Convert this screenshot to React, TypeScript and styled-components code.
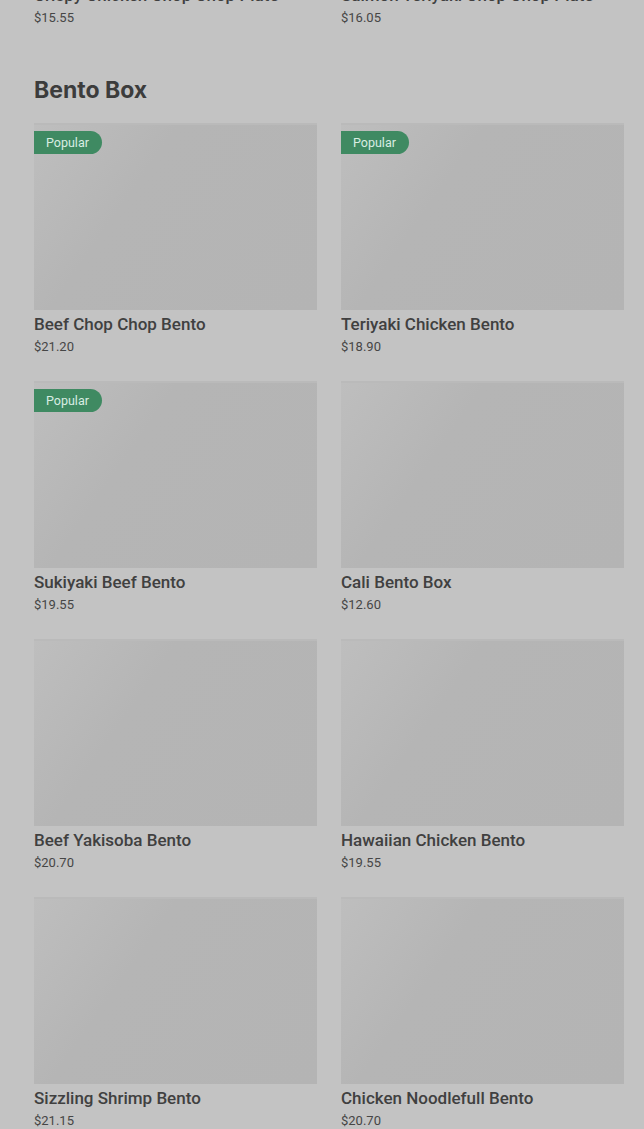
import React from "react";
import styled, { createGlobalStyle } from "styled-components";

type Item = { name: string; price: string; popular?: boolean };

const previous: Item[] = [
  { name: "Crispy Chicken Chop Chop Plate", price: "$15.55" },
  { name: "Salmon Teriyaki Chop Chop Plate", price: "$16.05" },
];

const bento: Item[] = [
  { name: "Beef Chop Chop Bento", price: "$21.20", popular: true },
  { name: "Teriyaki Chicken Bento", price: "$18.90", popular: true },
  { name: "Sukiyaki Beef Bento", price: "$19.55", popular: true },
  { name: "Cali Bento Box", price: "$12.60" },
  { name: "Beef Yakisoba Bento", price: "$20.70" },
  { name: "Hawaiian Chicken Bento", price: "$19.55" },
  { name: "Sizzling Shrimp Bento", price: "$21.15" },
  { name: "Chicken Noodlefull Bento", price: "$20.70" },
];

const App = () => {
  return (
    <>
      <GlobalStyle />
      <Page>
        <PrevGrid>
          {previous.map((item) => (
            <Card key={item.name}>
              <Name>{item.name}</Name>
              <Price>{item.price}</Price>
            </Card>
          ))}
        </PrevGrid>
        <Section>
          <Heading>Bento Box</Heading>
          <Grid>
            {bento.map((item) => (
              <Card key={item.name}>
                <Thumb>{item.popular && <Badge>Popular</Badge>}</Thumb>
                <Name>{item.name}</Name>
                <Price>{item.price}</Price>
              </Card>
            ))}
          </Grid>
        </Section>
      </Page>
    </>
  );
};

const GlobalStyle = createGlobalStyle`
  html, body {
    margin: 0;
    padding: 0;
    background: #c3c3c3;
    overflow: hidden;
  }
  body {
    font-family: Roboto, "Liberation Sans", sans-serif;
    color: #3a3a3a;
  }
`;

const Page = styled.div`
  padding: 0 20px 0 34px;
  height: 1129px;
  overflow: hidden;
`;

const Grid = styled.div`
  display: grid;
  grid-template-columns: repeat(2, 283px);
  column-gap: 24px;
  row-gap: 25px;
`;

const PrevGrid = styled(Grid)`
  margin-top: -19px;
`;

const Section = styled.section`
  margin-top: 49px;
`;

const Heading = styled.h2`
  margin: 0 0 19px;
  font-family: Inter, "Liberation Sans", sans-serif;
  font-weight: 700;
  font-size: 23px;
  line-height: 28px;
  color: #3c3c3c;
`;

const Card = styled.div`
  display: flex;
  flex-direction: column;
  min-width: 0;
`;

const Thumb = styled.div`
  position: relative;
  height: 187px;
  background: linear-gradient(125deg, #bebebe 0%, #b5b5b5 35%, #b4b4b4 100%);
  border-top: 2px solid #bababa;
  box-sizing: border-box;
`;

const Badge = styled.span`
  position: absolute;
  top: 6px;
  left: 0;
  height: 23px;
  padding: 0 13px 0 12px;
  display: flex;
  align-items: center;
  background: #3f8a62;
  color: #d9ede2;
  font-size: 12.5px;
  border-radius: 0 12px 12px 0;
`;

const Name = styled.div`
  margin-top: 4px;
  font-size: 17px;
  font-weight: 500;
  line-height: 20px;
  color: #404040;
  white-space: nowrap;
  overflow: hidden;
  text-overflow: ellipsis;
`;

const Price = styled.div`
  margin-top: 4px;
  font-size: 13px;
  line-height: 18px;
  color: #464646;
`;

export default App;
